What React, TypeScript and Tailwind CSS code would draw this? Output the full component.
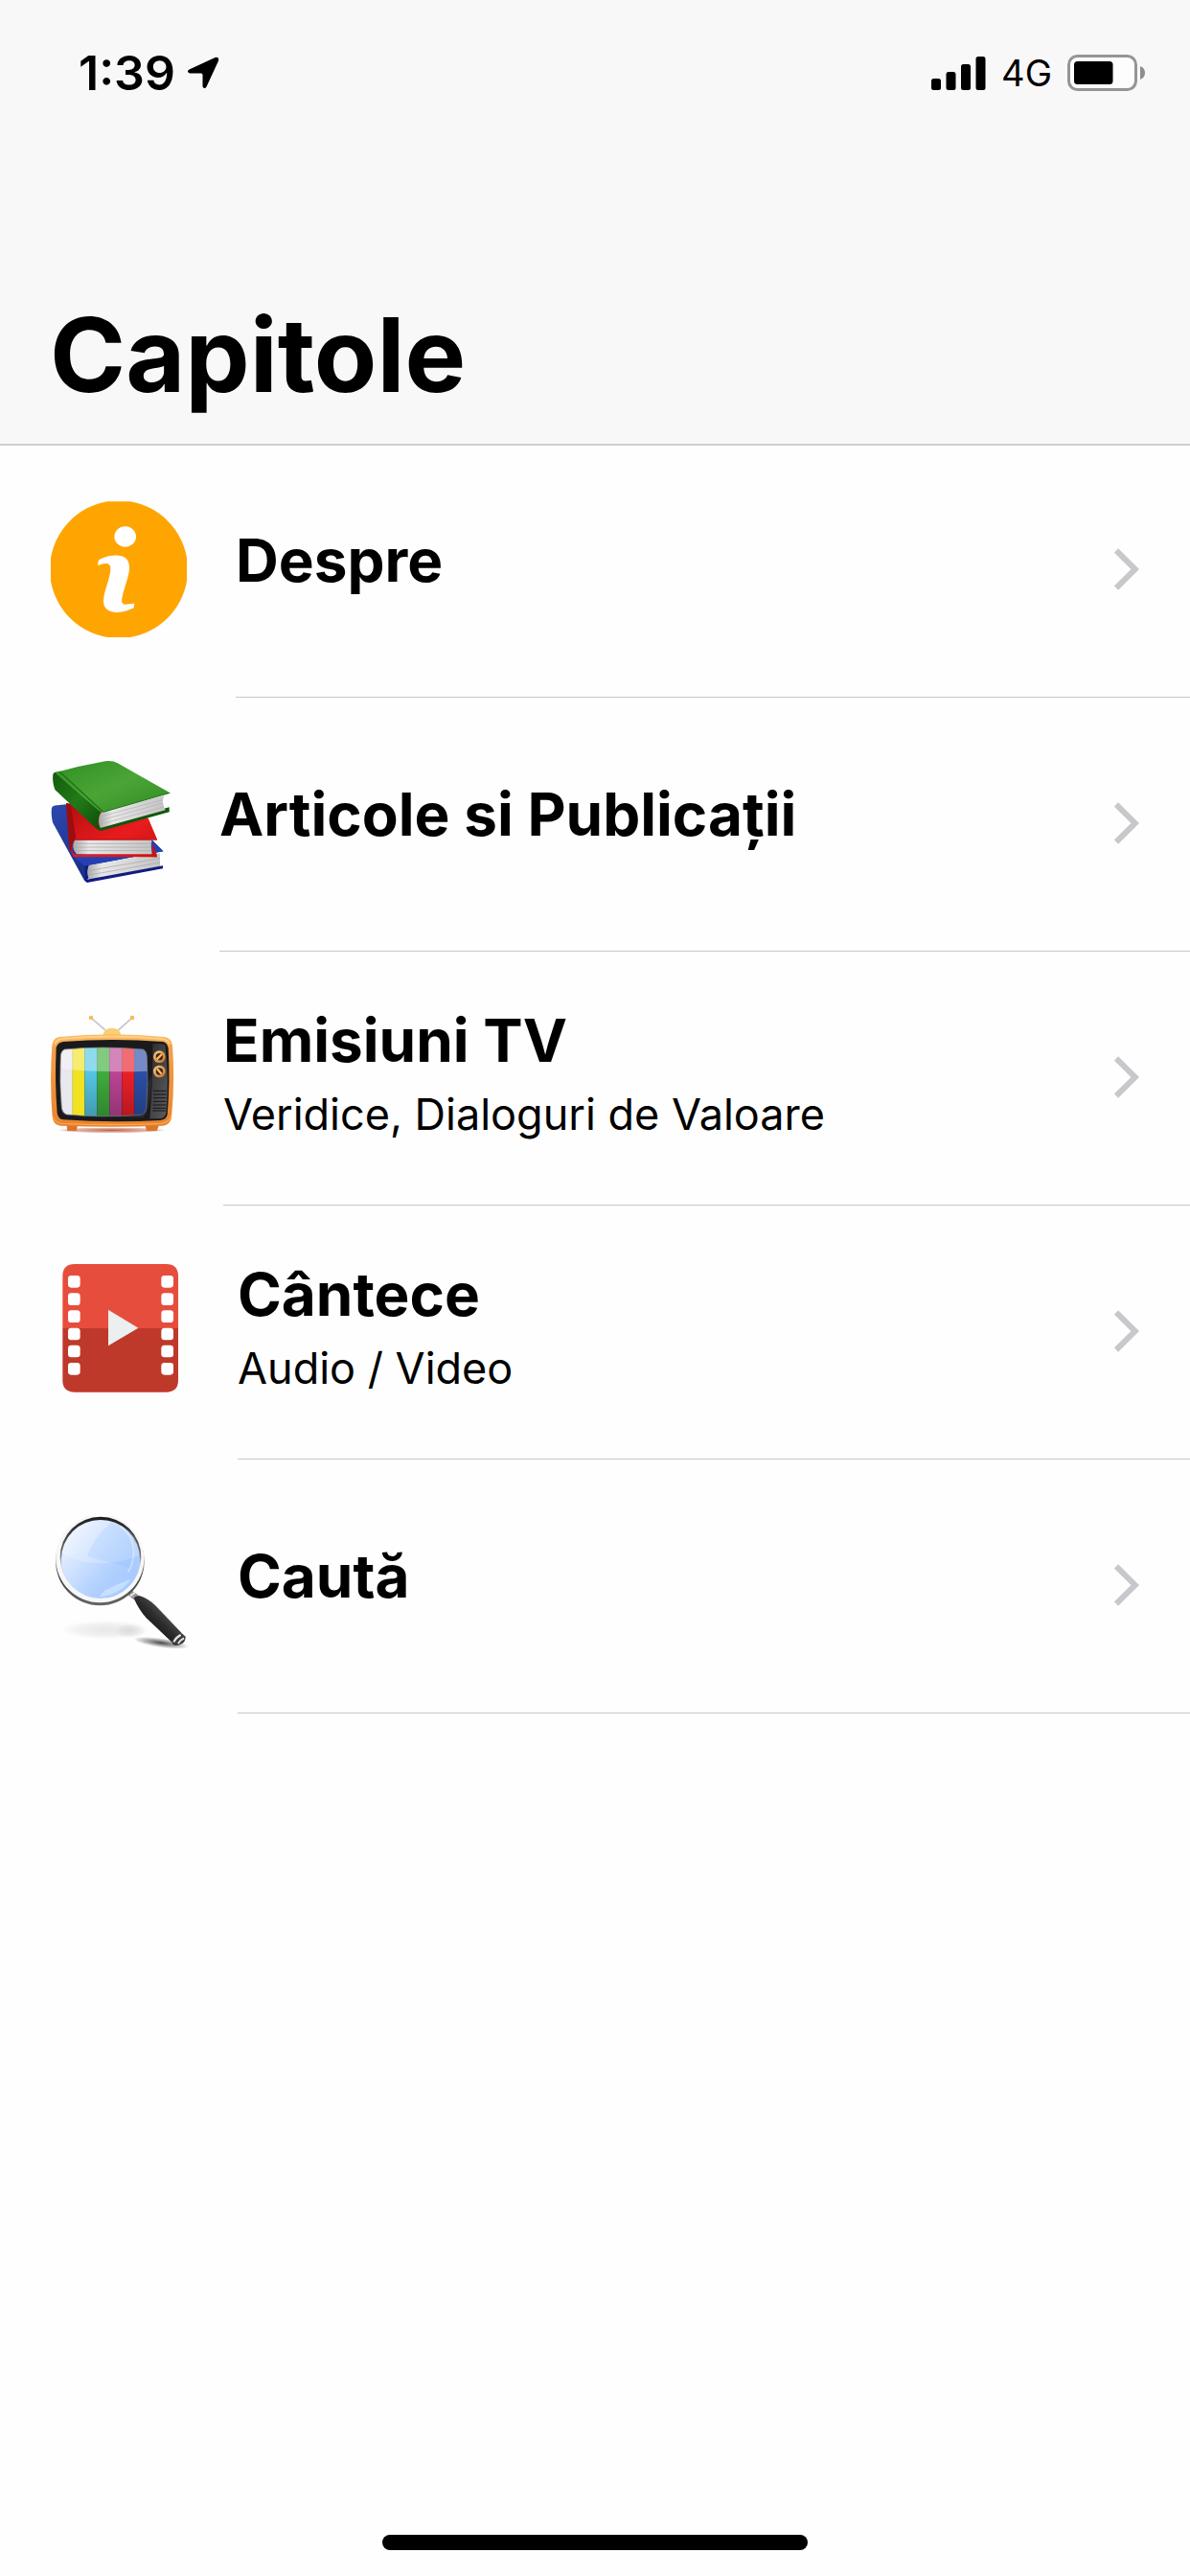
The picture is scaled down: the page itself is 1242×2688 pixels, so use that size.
import type { ReactNode } from "react";

function InfoIcon() {
  return (
    <svg viewBox="69 66 435 432" className="w-[145px] h-36 shrink-0" aria-hidden="true">
      <path
        d="M246 70H318A216 216 0 0 1 495 247V319A216 216 0 0 1 318 495H246A216 216 0 0 1 69 319V247A216 216 0 0 1 246 70Z"
        fill="#ffa502"
      />
      <ellipse cx="302" cy="180" rx="34" ry="32" fill="#fff" />
      <path
        d="M217 270C215 254 222 251 232 247C250 239 268 238 280 239C303 240 315 254 315 276C315 300 305 322 298 348C292 370 289 383 294 389C302 396 316 388 331 389L329 403C312 410 297 417 277 417C248 417 233 402 234 381C235 350 256 310 256 280C256 261 240 261 217 270Z"
        fill="#fff"
      />
    </svg>
  );
}

function BooksIcon() {
  return (
    <svg viewBox="69 54 384 432" className="w-32 h-36 shrink-0" aria-hidden="true">
      <defs>
        <linearGradient id="greenCover" x1="0" y1="0" x2="1" y2="1">
          <stop offset="0" stopColor="#2f8f22" />
          <stop offset="0.5" stopColor="#4ba536" />
          <stop offset="1" stopColor="#2f8a20" />
        </linearGradient>
        <linearGradient id="greenSpine" x1="0" y1="0" x2="1" y2="1">
          <stop offset="0" stopColor="#145a0e" />
          <stop offset="0.5" stopColor="#227a18" />
          <stop offset="1" stopColor="#0e4a0a" />
        </linearGradient>
        <linearGradient id="redCover" x1="0" y1="0" x2="1" y2="1">
          <stop offset="0" stopColor="#b50d10" />
          <stop offset="0.6" stopColor="#e81c1e" />
          <stop offset="1" stopColor="#c91214" />
        </linearGradient>
        <linearGradient id="blueSpine" x1="0" y1="0" x2="1" y2="1">
          <stop offset="0" stopColor="#2c48ae" />
          <stop offset="1" stopColor="#101f6e" />
        </linearGradient>
        <linearGradient id="pages" x1="0" y1="0" x2="1" y2="0">
          <stop offset="0" stopColor="#a9a9a9" />
          <stop offset="0.2" stopColor="#e8e8e8" />
          <stop offset="1" stopColor="#c4c4c4" />
        </linearGradient>
      </defs>
      {/* Blue book */}
      <path d="M72 222Q76 213 90 214L125 210L385 322L421 358L188 402L182 455L174 449L75 268Q69 240 72 222Z" fill="url(#blueSpine)" />
      <path d="M140 374L385 322L421 358L190 402L176 404Z" fill="#2440b4" />
      <path d="M188 402L411 364V406L190 446Q178 425 188 402Z" fill="url(#pages)" />
      <path d="M190 418L411 380M190 432L411 393" stroke="#a5a5a5" strokeWidth="2" />
      <path d="M182 446L420 403V412L183 456L176 450V404L188 402Q178 424 188 442Z" fill="#101c80" />
      {/* Red book */}
      <path d="M117 207L220 220L374 254L402 320L146 322Q132 330 137 362L150 368L400 364L402 376L140 376L128 350Z" fill="url(#redCover)" />
      <path d="M117 207L131 212L148 318Q134 322 133 360L127 350Z" fill="#9c0d0f" />
      <path d="M145 322L386 320Q380 344 388 367H150Q130 345 145 322Z" fill="url(#pages)" />
      <path d="M142 334H383M141 345H383M143 356H385" stroke="#a5a5a5" strokeWidth="2" />
      <path d="M144 321H402" stroke="#c90f12" strokeWidth="4" />
      <path d="M387 332L402 376H385Z" fill="#c91214" />
      {/* Green book */}
      <path d="M76 116Q80 109 96 109L228 230Q214 250 220 286L224 294L210 286L82 165Q73 140 76 116Z" fill="url(#greenSpine)" />
      <path d="M218 280L440 220V235L226 294L216 288Z" fill="#0f570a" />
      <path d="M229 233L424 184Q414 204 428 229L224 285Q212 256 229 233Z" fill="url(#pages)" />
      <path d="M222 250L420 197M221 262L420 207M222 274L424 218" stroke="#b0b0b0" strokeWidth="2" />
      <path d="M82 112Q160 90 240 76Q262 73 278 82L442 175L233 235Q224 237 217 229Z" fill="url(#greenCover)" />
      <path d="M96 108L232 234" stroke="#237518" strokeWidth="5" />
      <path d="M442 175L233 235" stroke="#1d7014" strokeWidth="3" />
    </svg>
  );
}

function TvIcon() {
  return (
    <svg viewBox="69 39 396 432" className="w-33 h-36 shrink-0" aria-hidden="true">
      <defs>
        <linearGradient id="tvBody" x1="0" y1="0" x2="0" y2="1">
          <stop offset="0" stopColor="#fbc069" />
          <stop offset="0.15" stopColor="#f3a04a" />
          <stop offset="1" stopColor="#e8822c" />
        </linearGradient>
        <linearGradient id="tvPanel" x1="0" y1="0" x2="1" y2="1">
          <stop offset="0" stopColor="#2c2c2f" />
          <stop offset="1" stopColor="#5c5c60" />
        </linearGradient>
        <linearGradient id="knob" x1="0" y1="0" x2="1" y2="1">
          <stop offset="0" stopColor="#fbd08a" />
          <stop offset="1" stopColor="#cf6f1c" />
        </linearGradient>
        <radialGradient id="tvShadow">
          <stop offset="0" stopColor="#a53a20" stopOpacity="0.8" />
          <stop offset="0.8" stopColor="#c96048" stopOpacity="0.4" />
          <stop offset="1" stopColor="#c96048" stopOpacity="0" />
        </radialGradient>
        <linearGradient id="bars" x1="0" y1="0" x2="0" y2="1">
          <stop offset="0" stopColor="#000" stopOpacity="0" />
          <stop offset="1" stopColor="#000" stopOpacity="0.25" />
        </linearGradient>
        <clipPath id="screen">
          <path d="M112 168Q230 156 358 168Q368 172 370 190Q375 270 368 352Q366 370 350 373Q230 383 118 372Q106 368 103 352Q95 270 100 186Q102 172 112 168Z" />
        </clipPath>
      </defs>
      <ellipse cx="260" cy="421" rx="172" ry="9" fill="url(#tvShadow)" />
      <path d="M197 71L240 108M322 71L280 108" stroke="#c5c8d2" strokeWidth="5" />
      <circle cx="195" cy="69" r="7" fill="#f7bd55" />
      <circle cx="324" cy="69" r="7" fill="#f7bd55" />
      <path d="M232 124Q236 101 261 101Q286 101 289 124Z" fill="#fbcd74" />
      <path d="M118 402H153L150 423H121ZM364 402H409L401 423H369Z" fill="#d9752c" />
      <path d="M95 129Q260 113 425 129Q447 133 450 155Q458 270 447 380Q444 403 420 407Q260 413 100 407Q76 403 74 380Q65 270 73 155Q76 133 95 129Z" fill="url(#tvBody)" />
      <path d="M82 152Q84 138 104 135Q260 121 416 135Q438 138 441 152" fill="none" stroke="#ffd28b" strokeWidth="5" />
      <path d="M76 378Q79 397 104 400Q260 407 416 400Q442 397 445 374" fill="none" stroke="#f7a650" strokeWidth="4" />
      <path d="M108 144Q260 132 420 144Q434 147 437 165Q443 270 434 372Q431 388 412 390Q260 398 108 388Q92 385 89 368Q81 270 86 163Q90 147 108 144Z" fill="#1a1a1c" />
      <path d="M388 151Q412 148 427 154Q440 260 430 366Q428 382 412 385H379Q389 270 388 151Z" fill="url(#tvPanel)" />
      <path d="M90 332H100Q101 365 110 372L358 382Q382 360 385 250L371 275" fill="#2a2a2d" />
      <g clipPath="url(#screen)">
        <path d="M95 150H138V390H95Z" fill="#e8e8ee" />
        <path d="M137 150H176V390H137Z" fill="#f1e222" />
        <path d="M175 150H215V390H175Z" fill="#54c8e4" />
        <path d="M214 150H254V390H214Z" fill="#3eae3c" />
        <path d="M253 150H293V390H253Z" fill="#bd4497" />
        <path d="M292 150H331V390H292Z" fill="#ec2028" />
        <path d="M330 150H378V390H330Z" fill="#2c4ea6" />
        <path d="M137 150V390M175 150V390M214 150V390M253 150V390M292 150V390M330 150V390" stroke="#000" strokeOpacity="0.2" strokeWidth="2" />
        <path d="M175 236H378V390H175Z" fill="url(#bars)" />
        <path d="M95 150H378V236Q230 242 95 228Z" fill="#fff" fillOpacity="0.35" />
      </g>
      <path d="M112 168Q230 156 358 168Q368 172 370 190Q375 270 368 352Q366 370 350 373Q230 383 118 372Q106 368 103 352Q95 270 100 186Q102 172 112 168Z" fill="none" stroke="#77777d" strokeOpacity="0.7" strokeWidth="3" />
      <circle cx="409" cy="191" r="19" fill="url(#knob)" />
      <circle cx="409" cy="237" r="19" fill="url(#knob)" />
      <circle cx="409" cy="191" r="11" fill="#3a2a1c" />
      <circle cx="409" cy="237" r="11" fill="#3a2a1c" />
      <path d="M401 199L417 183M402 229L416 245" stroke="#f6bb6c" strokeWidth="7" />
      <path d="M390 298H431M390 309H431M390 320H431M390 331H430M389 342H430M389 352H429M388 360H428" stroke="#161618" strokeWidth="3" />
    </svg>
  );
}

function FilmIcon() {
  const holes = [96, 151, 205, 260, 314, 369];

  return (
    <svg viewBox="69 54 441 432" className="w-[147px] h-36 shrink-0" aria-hidden="true">
      <path d="M106 262V98Q106 60 144 60H430Q468 60 468 98V262Z" fill="#e74d3d" />
      <path d="M106 261H468V424Q468 461 430 461H144Q106 461 106 424Z" fill="#bf392b" />
      {holes.map((y) => (
        <g key={y} fill="#fff">
          <rect x="123" y={y} width="38" height="38" rx="10" />
          <rect x="415" y={y} width="38" height="38" rx="10" />
        </g>
      ))}
      <path d="M249 203L343 260L249 316Z" fill="#ebefef" />
    </svg>
  );
}

function SearchIcon() {
  return (
    <svg viewBox="69 69 441 432" className="w-[147px] h-36 shrink-0" aria-hidden="true">
      <defs>
        <linearGradient id="glass" x1="0" y1="0" x2="1" y2="0.8">
          <stop offset="0" stopColor="#fafcff" />
          <stop offset="0.3" stopColor="#d9e8ff" />
          <stop offset="0.7" stopColor="#b0d0fe" />
          <stop offset="1" stopColor="#a5c8fe" />
        </linearGradient>
        <linearGradient id="rimEdge" x1="0" y1="0" x2="0" y2="1">
          <stop offset="0" stopColor="#ededed" />
          <stop offset="0.4" stopColor="#b8b8b8" />
          <stop offset="0.7" stopColor="#444" />
          <stop offset="1" stopColor="#666" />
        </linearGradient>
        <linearGradient id="rimInner" x1="0" y1="0" x2="0" y2="1">
          <stop offset="0" stopColor="#1c1c1c" />
          <stop offset="0.45" stopColor="#666" />
          <stop offset="0.6" stopColor="#c9d4ea" />
        </linearGradient>
        <linearGradient id="grip" x1="0" y1="0.6" x2="0.6" y2="0">
          <stop offset="0" stopColor="#0c0c0c" />
          <stop offset="0.5" stopColor="#2c2c2c" />
          <stop offset="1" stopColor="#666" />
        </linearGradient>
        <radialGradient id="softShadow">
          <stop offset="0" stopColor="#000" stopOpacity="0.09" />
          <stop offset="0.6" stopColor="#000" stopOpacity="0.05" />
          <stop offset="1" stopColor="#000" stopOpacity="0" />
        </radialGradient>
        <radialGradient id="gripShadow">
          <stop offset="0" stopColor="#000" stopOpacity="0.7" />
          <stop offset="1" stopColor="#000" stopOpacity="0" />
        </radialGradient>
      </defs>
      <ellipse cx="240" cy="425" rx="140" ry="30" fill="url(#softShadow)" />
      <ellipse cx="318" cy="428" rx="48" ry="24" fill="url(#softShadow)" />
      <ellipse cx="415" cy="466" rx="88" ry="15" fill="url(#gripShadow)" transform="rotate(8 415 466)" />
      <path d="M310 316L324 303L343 316L329 331Z" fill="#9a9a9a" />
      <path d="M318 319L334 307" stroke="#f4f4f4" strokeWidth="5" />
      <path d="M329 326Q335 317 346 318Q375 327 398 350L478 434Q475 454 452 464L447 463L368 388Q345 362 329 326Z" fill="url(#grip)" />
      <path d="M447 462Q455 444 478 435L491 446Q492 463 476 470Q462 477 452 472Z" fill="#3c3c3c" />
      <path d="M454 463Q461 449 476 441M468 468Q473 458 486 451" stroke="#e6e6e6" strokeWidth="6" fill="none" />
      <circle cx="223" cy="210" r="139" fill="url(#rimEdge)" />
      <circle cx="223" cy="202" r="138" fill="#f7f7f7" />
      <circle cx="225" cy="198" r="127" fill="url(#rimInner)" />
      <circle cx="225" cy="204" r="123" fill="url(#glass)" />
      <path d="M102 186Q150 216 226 217Q280 218 347 192Q343 130 300 106Q268 82 225 81Q150 84 117 144Q104 165 102 186Z" fill="#fff" fillOpacity="0.22" />
      <path d="M183 196Q202 135 260 88Q309 103 327 160Q336 210 321 232" fill="#8dbcff" fillOpacity="0.2" />
      <path d="M285 101Q330 130 328 190Q325 226 310 244" fill="none" stroke="#e4efff" strokeOpacity="0.6" strokeWidth="5" />
      <path d="M238 302Q270 284 320 267Q280 320 220 321Z" fill="#d9ebff" fillOpacity="0.6" />
    </svg>
  );
}

type Chapter = {
  title: string;
  subtitle?: string;
  icon: ReactNode;
};

const chapters: Chapter[] = [
  { title: "Despre", icon: <InfoIcon /> },
  { title: "Articole si Publicații", icon: <BooksIcon /> },
  { title: "Emisiuni TV", subtitle: "Veridice, Dialoguri de Valoare", icon: <TvIcon /> },
  { title: "Cântece", subtitle: "Audio / Video", icon: <FilmIcon /> },
  { title: "Caută", icon: <SearchIcon /> },
];

function StatusBar() {
  return (
    <div className="flex h-[152px] items-center justify-between pl-[82px] pr-[46px]">
      <div className="flex items-center gap-3">
        <span className="text-[50px] leading-[60px] font-semibold">1:39</span>
        <svg viewBox="0 0 34 34" className="size-[34px]" aria-hidden="true">
          <path
            d="M2.500 13.500L29.500 1Q34 0 33 4.500L20.500 31.500Q18.500 34.500 16.500 31.500V19Q16.500 17.500 15 17.500H3Q-1 16 2.500 13.500Z"
            fill="#000"
          />
        </svg>
      </div>
      <div className="flex items-center gap-4">
        <svg viewBox="0 0 57 35" className="w-[57px] h-[35px]" aria-hidden="true">
          <rect x="0" y="23" width="10" height="12" rx="2.500" />
          <rect x="15.500" y="16" width="10" height="19" rx="2.500" />
          <rect x="31" y="8" width="10" height="27" rx="2.500" />
          <rect x="46.500" y="0" width="10" height="35" rx="2.500" />
        </svg>
        <span className="text-[38px] leading-[60px]">4G</span>
        <svg viewBox="0 0 82 38" className="w-[82px] h-[38px]" aria-hidden="true">
          <rect x="1.500" y="1.500" width="70" height="35" rx="9" fill="#fdfdfd" stroke="#959595" strokeWidth="3" />
          <rect x="7" y="7" width="40.500" height="24" rx="3.500" />
          <path d="M76 12Q81 14 81 19Q81 24 76 26Z" fill="#8e8e8e" />
        </svg>
      </div>
    </div>
  );
}

function ChapterRow({ title, subtitle, icon }: Chapter) {
  return (
    <li>
      <a href="#" className="flex min-h-[265px] items-stretch pl-[53px]">
        <span className="flex items-center pr-12 pb-[3px]">{icon}</span>
        <span className="flex flex-1 items-center justify-between border-b border-[#c8c7cc] pr-[53px]">
          <span className={subtitle ? "flex flex-col" : "flex flex-col pb-5"}>
            <span className="text-[62px] leading-[76px] font-bold">{title}</span>
            {subtitle && <span className="text-[45px] leading-[78px]">{subtitle}</span>}
          </span>
          <svg viewBox="0 0 26 44" className="mb-0.5 w-[26px] h-11 shrink-0" aria-hidden="true">
            <path d="M2 2.500L21.800 22L2 41.500" fill="none" stroke="#c7c7cc" strokeWidth="6" />
          </svg>
        </span>
      </a>
    </li>
  );
}

export default function App() {
  return (
    <div className="flex min-h-screen flex-col bg-[#fefefe] font-['Inter','Liberation_Sans',sans-serif] text-black">
      <header className="bg-[#f8f8f8] shadow-[0_2px_0_#cfcfcf]">
        <StatusBar />
        <h1 className="px-[52px] pt-[158px] pb-[33px] text-[107px] leading-[120px] font-bold">Capitole</h1>
      </header>

      <main className="flex-1">
        <ul>
          {chapters.map((chapter) => (
            <ChapterRow key={chapter.title} {...chapter} />
          ))}
        </ul>
      </main>

      {/* Home indicator */}
      <div className="flex justify-center pb-[27px]">
        <div className="h-4 w-[444px] rounded-full bg-black" />
      </div>
    </div>
  );
}
